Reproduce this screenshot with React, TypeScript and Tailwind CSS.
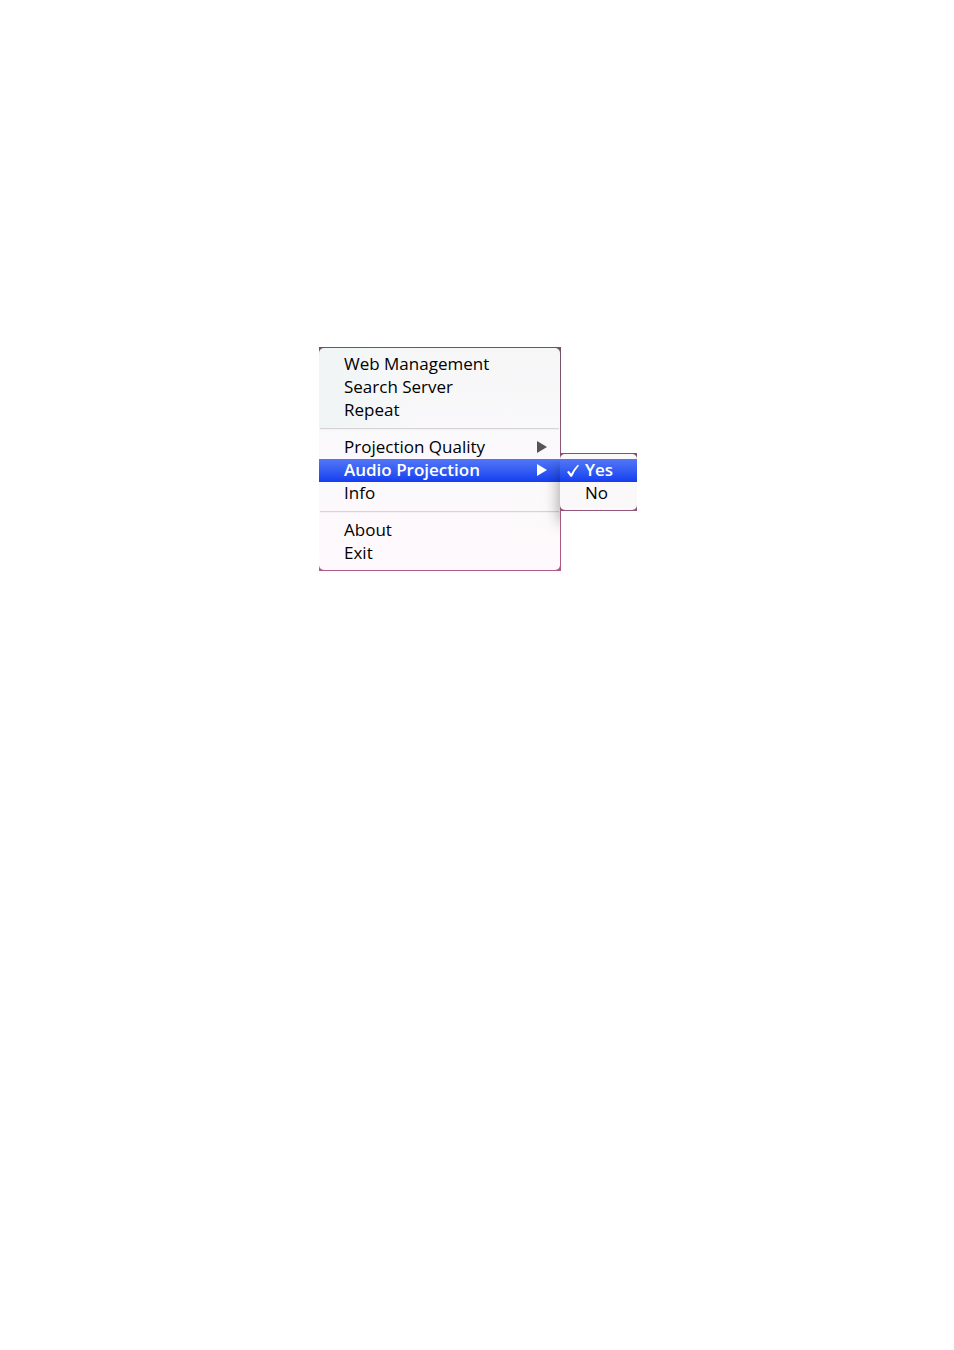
import type { ReactNode } from "react";

function Arrow({ className }: { className: string }) {
  return (
    <svg aria-hidden="true" viewBox="0 0 10 12" className={`h-3 w-2.5 ${className}`} fill="currentColor">
      <path d="M0 0 10 6 0 12Z" />
    </svg>
  );
}

function Item({ label, active, submenu }: { label: string; active?: boolean; submenu?: boolean }) {
  return (
    <button
      type="button"
      role="menuitem"
      aria-haspopup={submenu ? "menu" : undefined}
      aria-expanded={submenu ? !!active : undefined}
      className={`flex h-[23px] w-full items-center justify-between pr-[13px] pb-0.5 pl-[25px] text-left ${
        active ? "bg-linear-to-b from-[#5376f6] to-[#153cf0] font-semibold text-white" : "font-medium text-black"
      }`}
    >
      <span>{label}</span>
      {submenu && <Arrow className={active ? "text-white" : "text-[#555555]"} />}
    </button>
  );
}

function Separator() {
  return (
    <div role="separator" className="px-px py-[6px]">
      <div className="h-0.5 border-t border-[#d5d3d6] bg-[#f3f1f4]" />
    </div>
  );
}

function Choice({ label, checked }: { label: string; checked?: boolean }) {
  return (
    <button
      type="button"
      role="menuitemradio"
      aria-checked={!!checked}
      className={`flex h-[23px] w-full items-center pb-0.5 pl-[7px] text-left ${
        checked ? "bg-linear-to-b from-[#5376f6] to-[#153cf0] font-semibold text-white" : "font-medium text-black"
      }`}
    >
      <span className="flex w-[18px] items-center">
        {checked && (
          <svg aria-hidden="true" viewBox="0 0 12 14" className="h-3.5 w-3" fill="currentColor">
            <path d="M0 9 1.8 7.800 4.200 10.800Q6.800 5.500 10.800 1.800L12 2.600Q7.800 7.400 5 13.800L3.500 13.800Z" />
          </svg>
        )}
      </span>
      <span>{label}</span>
    </button>
  );
}

function WithSubmenu({ children, submenu }: { children: ReactNode; submenu: ReactNode }) {
  return (
    <div className="relative">
      {children}
      {submenu}
    </div>
  );
}

export default function App() {
  return (
    <main className="flex min-h-screen items-start justify-center bg-white pt-[347px] pr-[74px] font-['Open_Sans','Noto_Sans',sans-serif] text-[17px] leading-[23px]">
      <div className="w-[242px] bg-linear-to-b from-[#73506a] to-[#b35b86] py-px pr-px">
        <div
          role="menu"
          aria-label="Projection menu"
          className="rounded-[5px] bg-[#fbf9fb] bg-[linear-gradient(to_right,#eff4f4_0px,#f5f7f8_60px,transparent_100px),linear-gradient(to_bottom,#f6f6f7,#fbf9fb_50%,#fef9fc)] bg-[size:100%_82px,100%_100%] bg-no-repeat py-[5px]"
        >
          <Item label="Web Management" />
          <Item label="Search Server" />
          <Item label="Repeat" />
          <Separator />
          <Item label="Projection Quality" submenu />
          <WithSubmenu
            submenu={
              <div className="absolute -top-1.5 left-full w-[77px]">
                <div className="absolute top-2 right-full h-20 w-8 overflow-hidden" aria-hidden="true">
                  <div className="ml-8 h-14 w-8 shadow-[0_4px_16px_0_rgba(0,0,0,0.4)]" />
                </div>
                <div className="relative bg-linear-to-b from-[#855171] to-[#93557a] py-px">
                  <div role="menu" aria-label="Audio Projection" className="rounded-[5px] bg-[#fbf8fa] py-[5px]">
                    <Choice label="Yes" checked />
                    <Choice label="No" />
                  </div>
                </div>
              </div>
            }
          >
            <Item label="Audio Projection" active submenu />
          </WithSubmenu>
          <Item label="Info" />
          <Separator />
          <Item label="About" />
          <Item label="Exit" />
        </div>
      </div>
    </main>
  );
}
